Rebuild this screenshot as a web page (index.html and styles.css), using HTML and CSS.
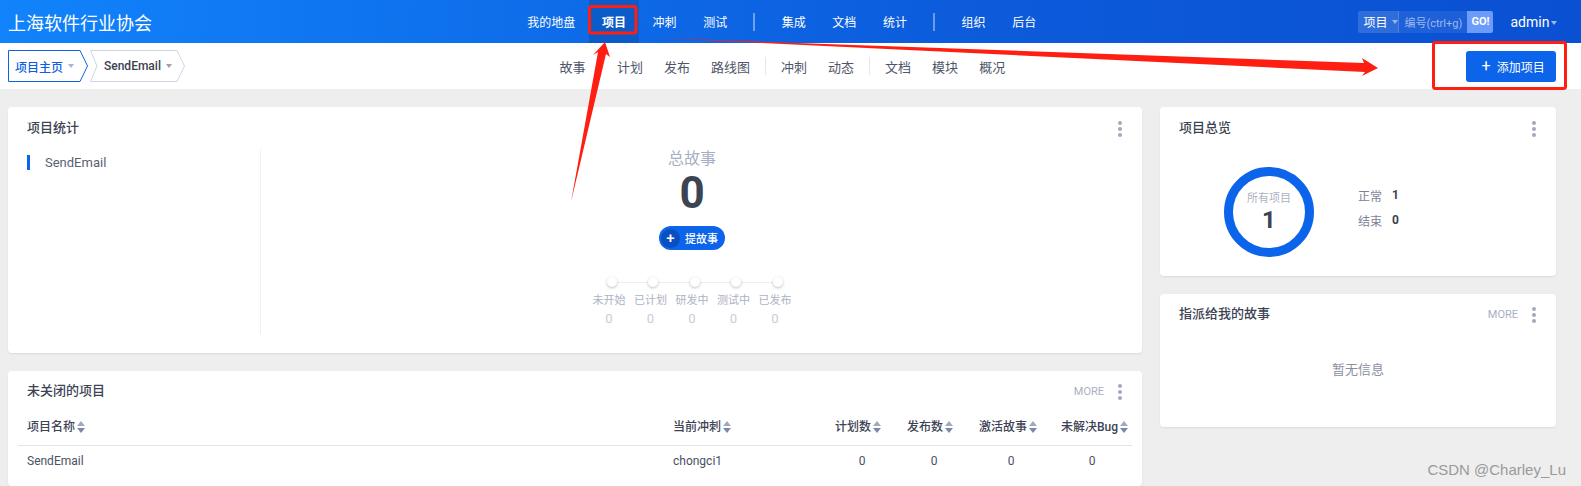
FILE: index.html
```html
<!DOCTYPE html>
<html>
<head>
    <meta charset="utf-8">
    <title>上海软件行业协会</title>
    <link rel="stylesheet" href="styles.css">
</head>
<body>
    <!-- Top bar -->
    <header class="topbar">
        <div class="brand">上海软件行业协会</div>
        <nav class="mainNav">
            <a>我的地盘</a>
            <a class="active">项目</a>
            <a>冲刺</a>
            <a>测试</a>
            <i class="navSep"></i>
            <a>集成</a>
            <a>文档</a>
            <a>统计</a>
            <i class="navSep"></i>
            <a>组织</a>
            <a>后台</a>
        </nav>
        <div class="search">
            <span class="searchType">项目<i class="caret"></i></span>
            <span class="searchInput">编号(ctrl+g)</span>
            <span class="searchGo">GO!</span>
        </div>
        <div class="user">admin<i class="caret"></i></div>
    </header>

    <!-- Sub bar -->
    <div class="subbar">
        <div class="crumbs">
            <div class="crumb crumbFirst">
                <svg class="crumbShape" viewBox="0 0 80 32" preserveAspectRatio="none"><path d="M.5.5H72L79.5 16 72 31.5H.5z"/></svg>
                <span>项目主页</span><i class="caret"></i>
            </div>
            <div class="crumb crumbSecond">
                <svg class="crumbShape" viewBox="0 0 95 32" preserveAspectRatio="none"><path d="M.5.5H87L94.5 16 87 31.5H.5L7 16z"/></svg>
                <span>SendEmail</span><i class="caret"></i>
            </div>
        </div>
        <nav class="subNav">
            <a class="subFirst">故事</a>
            <a>计划</a>
            <a>发布</a>
            <a>路线图</a>
            <i class="subSep"></i>
            <a>冲刺</a>
            <a>动态</a>
            <i class="subSep"></i>
            <a>文档</a>
            <a>模块</a>
            <a>概况</a>
        </nav>
        <button class="addBtn"><span class="addPlus">+</span>添加项目</button>
    </div>

    <main class="content">
        <div class="colLeft">
            <section class="card statsCard">
                <div class="cardHead">
                    <h3>项目统计</h3>
                    <span class="dots"></span>
                </div>
                <div class="statsBody">
                    <div class="statsList"><span class="statsItem">SendEmail</span></div>
                    <div class="statsMain">
                        <div class="totalLabel">总故事</div>
                        <div class="totalNum">0</div>
                        <button class="storyBtn"><span class="storyPlus">+</span>提故事</button>
                        <div class="steps">
                            <div class="step"><i></i><span>未开始</span><b>0</b></div>
                            <div class="step"><i></i><span>已计划</span><b>0</b></div>
                            <div class="step"><i></i><span>研发中</span><b>0</b></div>
                            <div class="step"><i></i><span>测试中</span><b>0</b></div>
                            <div class="step"><i></i><span>已发布</span><b>0</b></div>
                        </div>
                    </div>
                </div>
            </section>

            <section class="card tableCard">
                <div class="cardHead">
                    <h3>未关闭的项目</h3>
                    <span class="more">MORE</span>
                    <span class="dots"></span>
                </div>
                <table class="projects">
                    <colgroup>
                        <col class="colName"><col class="colSprint"><col class="colA"><col class="colA"><col class="colB"><col class="colC">
                    </colgroup>
                    <thead>
                        <tr>
                            <th>项目名称<i class="sort"></i></th>
                            <th>当前冲刺<i class="sort"></i></th>
                            <th>计划数<i class="sort"></i></th>
                            <th>发布数<i class="sort"></i></th>
                            <th>激活故事<i class="sort"></i></th>
                            <th>未解决Bug<i class="sort"></i></th>
                        </tr>
                    </thead>
                    <tbody>
                        <tr>
                            <td>SendEmail</td>
                            <td>chongci1</td>
                            <td class="num">0</td>
                            <td class="num">0</td>
                            <td class="num">0</td>
                            <td class="num">0</td>
                        </tr>
                    </tbody>
                </table>
            </section>
        </div>

        <div class="colRight">
            <section class="card overviewCard">
                <div class="cardHead">
                    <h3>项目总览</h3>
                    <span class="dots"></span>
                </div>
                <div class="overviewBody">
                    <div class="ring">
                        <span class="ringLabel">所有项目</span>
                        <b class="ringNum">1</b>
                    </div>
                    <div class="legend">
                        <div class="legendRow"><span>正常</span><b>1</b></div>
                        <div class="legendRow"><span>结束</span><b>0</b></div>
                    </div>
                </div>
            </section>

            <section class="card assignedCard">
                <div class="cardHead">
                    <h3>指派给我的故事</h3>
                    <span class="more">MORE</span>
                    <span class="dots"></span>
                </div>
                <div class="empty">暂无信息</div>
            </section>
        </div>
    </main>

    <!-- Red annotations drawn over the screenshot -->
    <svg class="marks" viewBox="0 0 1581 486" width="1581" height="486">
        <rect class="markBox" x="589.5" y="6.5" width="46.5" height="26.5" rx="2"/>
        <rect class="markBox" x="1433.5" y="42.5" width="132" height="46" rx="2"/>
        <path class="markFill" d="M571 202L598 52 593 55 605 42 610 57 606 54z"/>
        <path class="markFill" d="M659 38L1364 63 1362 58 1378 68 1362 76 1365 72z"/>
    </svg>
    <div class="watermark">CSDN @Charley_Lu</div>
</body>
</html>
```

FILE: styles.css
```css
* {
    box-sizing: border-box;
}

html, body {
    margin: 0;
    height: 486px;
    overflow: hidden;
}

body {
    position: relative;
    background-color: #eeeeee;
    color: #3c4353;
    font-family: Roboto, "Noto Sans CJK SC", sans-serif;
    font-size: 12px;
}

h3 {
    margin: 0;
    font-size: 13px;
    font-weight: 500;
    color: #3c4353;
}

/* Top bar */
.topbar {
    display: flex;
    align-items: center;
    height: 43px;
    background: linear-gradient(95deg, #1183fb 0%, #0c5cdc 60%, #0a50d2 100%);
    color: #fff;
}

.brand {
    width: 514px;
    padding-left: 8px;
    font-size: 18px;
}

.mainNav {
    display: flex;
    align-items: center;
    height: 43px;
}

.mainNav a {
    display: flex;
    align-items: center;
    height: 43px;
    padding: 0 13.3px;
}

.mainNav a.active {
    background-color: #0b5cc9;
    font-weight: 700;
}

.navSep {
    width: 2px;
    height: 18px;
    margin: 0 13px;
    background-color: rgba(255, 255, 255, 0.4);
}

.caret {
    display: inline-block;
    width: 0;
    height: 0;
    margin-left: 5px;
    vertical-align: middle;
    border-top: 4px solid currentColor;
    border-left: 3.5px solid transparent;
    border-right: 3.5px solid transparent;
}

.search {
    display: flex;
    align-items: center;
    height: 22px;
    margin-left: 309px;
    font-size: 11px;
}

.searchType {
    display: flex;
    align-items: center;
    height: 22px;
    width: 41px;
    padding-left: 5px;
    background-color: rgba(255, 255, 255, 0.15);
    border-right: 1px solid rgba(255, 255, 255, 0.15);
    border-radius: 2px 0 0 2px;
    font-size: 12px;
}

.searchType .caret {
    color: rgba(255, 255, 255, 0.5);
}

.searchInput {
    display: flex;
    align-items: center;
    height: 22px;
    width: 68px;
    padding-left: 5px;
    background-color: rgba(255, 255, 255, 0.08);
    color: #9db8ee;
}

.searchGo {
    display: flex;
    align-items: center;
    justify-content: center;
    width: 26px;
    height: 22px;
    background-color: #6d9bfa;
    border-radius: 0 2px 2px 0;
    font-weight: 700;
}

.user {
    margin-left: 17px;
    font-size: 14px;
}

.user .caret {
    margin-left: 2px;
    color: rgba(255, 255, 255, 0.6);
}

/* Sub bar */
.subbar {
    display: flex;
    align-items: center;
    height: 46px;
    padding-left: 8px;
    background-color: #fff;
}

.crumbs {
    display: flex;
    gap: 2px;
    width: 541px;
}

.crumb {
    position: relative;
    display: flex;
    align-items: center;
    height: 32px;
}

.crumb span, .crumb .caret {
    position: relative;
}

.crumbShape {
    position: absolute;
    inset: 0;
    width: 100%;
    height: 100%;
    fill: #fff;
    stroke: #cfd4e3;
}

.crumbFirst {
    width: 80px;
    padding-left: 7px;
    color: #0e5fe0;
    font-weight: 500;
}

.crumbFirst .crumbShape {
    stroke: #0e62e6;
}

.crumbFirst .caret {
    color: #a3b4d8;
}

.crumbSecond {
    width: 95px;
    padding-left: 14px;
    font-weight: 500;
}

.crumbSecond .caret {
    color: #9b9fae;
}

.subNav {
    display: flex;
    align-items: center;
    font-size: 13px;
    color: #50566a;
}

.subNav a {
    padding: 0 10.5px;
}

.subNav a.subFirst {
    padding-right: 21px;
}

.subSep {
    width: 1px;
    height: 18px;
    margin: 0 4.5px;
    background-color: #e6e8ee;
}

.addBtn {
    display: flex;
    align-items: center;
    justify-content: center;
    width: 90px;
    height: 31px;
    margin-left: 450px;
    padding: 0 0 0 5px;
    background-color: #0c64eb;
    border: none;
    border-radius: 3px;
    color: #fff;
    font-family: inherit;
    font-size: 12px;
}

.addPlus {
    margin-right: 6px;
    font-size: 16px;
    line-height: 16px;
}

/* Page content */
.content {
    display: flex;
    gap: 18px;
    padding: 18px 25px 0 8px;
}

.colLeft {
    display: flex;
    flex-direction: column;
    gap: 18px;
    width: 1134px;
}

.colRight {
    display: flex;
    flex-direction: column;
    gap: 18px;
    width: 396px;
}

.card {
    background-color: #fff;
    border-radius: 4px;
    box-shadow: 0 1px 2px rgba(0, 0, 0, 0.08);
}

.cardHead {
    display: flex;
    align-items: center;
    height: 38px;
    padding: 0 19px;
}

.cardHead h3 {
    flex: 1;
}

.more {
    margin-top: 5px;
    margin-right: 14px;
    color: #a9afc2;
    font-size: 11px;
}

/* Three vertical dots drawn with shadows */
.dots {
    width: 4px;
    height: 4px;
    margin-right: 1px;
    margin-top: -7px;
    border-radius: 50%;
    background-color: #a3a9bc;
    box-shadow: 0 6px 0 #a3a9bc, 0 12px 0 #a3a9bc;
}

/* Project stats card */
.statsCard {
    height: 246px;
}

.statsBody {
    display: flex;
    margin-top: 4px;
    padding-right: 19px;
}

.statsList {
    width: 253px;
    height: 185px;
    padding-left: 19px;
    padding-top: 6px;
    border-right: 1px solid #eef0f5;
}

.statsItem {
    display: block;
    height: 15px;
    padding-left: 15px;
    border-left: 3px solid #0c64eb;
    font-size: 13px;
    line-height: 15px;
    color: #5a6072;
}

.statsMain {
    flex: 1;
    display: flex;
    flex-direction: column;
    align-items: center;
}

.totalLabel {
    font-size: 16px;
    line-height: 20px;
    color: #a9afc2;
}

.totalNum {
    margin-top: 2px;
    font-size: 44px;
    line-height: 44px;
    font-weight: 700;
    color: #3c4353;
}

.storyBtn {
    display: flex;
    align-items: center;
    width: 66px;
    height: 24px;
    margin-top: 11px;
    padding: 0 0 0 2px;
    background-color: #0c64eb;
    border: none;
    border-radius: 12px;
    color: #fff;
    font-family: inherit;
    font-size: 11px;
    font-weight: 500;
}

.storyPlus {
    width: 19px;
    height: 19px;
    margin-right: 5px;
    border-radius: 50%;
    background-color: #0a4fc0;
    font-size: 15px;
    line-height: 18px;
}

.steps {
    position: relative;
    display: flex;
    margin-top: 27px;
}

.steps::before {
    content: "";
    position: absolute;
    left: 22px;
    right: 18px;
    top: 5px;
    height: 1px;
    background-color: #eeeeee;
}

.step {
    position: relative;
    display: flex;
    flex-direction: column;
    align-items: center;
    width: 41.5px;
}

.step i {
    width: 10px;
    height: 10px;
    margin-left: 5px;
    border-radius: 50%;
    background-color: #fff;
    box-shadow: 0 1px 3px rgba(0, 0, 0, 0.25);
}

.step span {
    margin-top: 6px;
    font-size: 11px;
    line-height: 16px;
    color: #adb2c4;
}

.step b {
    margin-top: 2px;
    font-size: 13px;
    font-weight: 400;
    line-height: 16px;
    color: #c6cddd;
}

/* Open projects table */
.tableCard {
    height: 115px;
}

.tableCard .cardHead {
    height: 36px;
    margin-bottom: 2px;
}

.projects {
    width: 1114px;
    margin-left: 10px;
    border-collapse: collapse;
    table-layout: fixed;
}

.colName { width: 646px; }
.colSprint { width: 162px; }
.colA { width: 72px; }
.colB { width: 82px; }
.colC { width: 80px; }

.projects th {
    height: 36px;
    padding: 0 0 2px 9px;
    border-bottom: 1px solid #e4e4e4;
    text-align: left;
    font-weight: 500;
    color: #3c4353;
    white-space: nowrap;
}

.projects td {
    height: 32px;
    padding: 0 0 0 9px;
    color: #4a5063;
}

.projects td.num {
    padding: 0;
    text-align: center;
}

/* Sort arrows */
.sort {
    position: relative;
    display: inline-block;
    width: 9px;
    height: 12px;
    margin-left: 2px;
    vertical-align: -2px;
}

.sort::before, .sort::after {
    content: "";
    position: absolute;
    left: 0;
    border-left: 4.5px solid transparent;
    border-right: 4.5px solid transparent;
}

.sort::before {
    top: 0;
    border-bottom: 5.5px solid #a5a9b5;
}

.sort::after {
    bottom: 0;
    border-top: 5.5px solid #7d88a8;
}

/* Overview card */
.overviewCard {
    height: 169px;
}

.overviewBody {
    display: flex;
    align-items: center;
    padding: 22px 0 0 64px;
}

.ring {
    display: flex;
    flex-direction: column;
    align-items: center;
    width: 90px;
    height: 90px;
    padding-top: 15px;
    border: 9px solid #0c64eb;
    border-radius: 50%;
}

.ringLabel {
    font-size: 11px;
    line-height: 16px;
    color: #adb2c4;
}

.ringNum {
    margin-top: -1px;
    font-size: 24px;
    line-height: 28px;
    font-weight: 700;
}

.legend {
    margin-left: 44px;
    margin-top: -9px;
}

.legendRow {
    display: flex;
    gap: 10px;
    align-items: center;
    height: 25px;
    color: #7d8396;
}

.legendRow b {
    color: #3c4353;
    font-weight: 700;
}

/* Assigned stories card */
.assignedCard {
    height: 133px;
}

.assignedCard .cardHead {
    height: 36px;
}

.empty {
    margin-top: 29px;
    text-align: center;
    font-size: 13px;
    color: #8b90a1;
}

/* Annotations */
.marks {
    position: absolute;
    left: 0;
    top: 0;
    pointer-events: none;
}

.markBox {
    fill: none;
    stroke: #ff1f12;
    stroke-width: 3;
}

.markFill {
    fill: #ff1f12;
}

.watermark {
    position: absolute;
    right: 15px;
    bottom: 8px;
    font-family: "Liberation Sans", sans-serif;
    font-size: 15px;
    color: #9a9a9a;
}
```
